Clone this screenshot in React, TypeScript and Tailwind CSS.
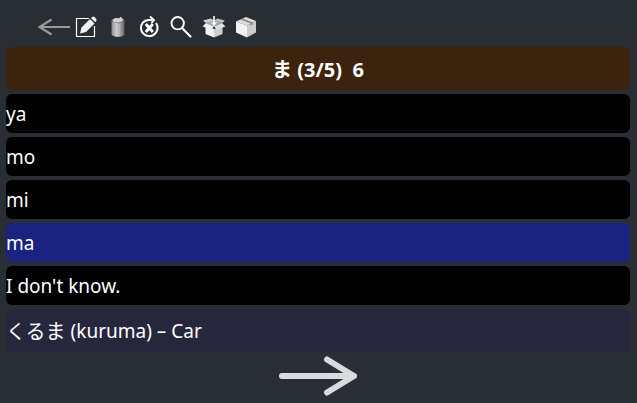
import { useState } from 'react';

const answers = ['ya', 'mo', 'mi', 'ma', "I don't know."];

export default function App() {
    const [selected, setSelected] = useState('ma');

    return (
        <div className="min-h-screen bg-[#292d34] pl-[6px] pr-[7px] pt-[11px] text-[19px] text-white font-['Noto_Sans','Noto_Sans_CJK_JP',sans-serif]">

            {/* Toolbar */}
            <nav className="flex pl-8 mb-1">
                <ToolButton label="Back"><BackIcon /></ToolButton>
                <ToolButton label="Edit"><EditIcon /></ToolButton>
                <ToolButton label="Delete"><TrashIcon /></ToolButton>
                <ToolButton label="Reset progress"><ResetIcon /></ToolButton>
                <ToolButton label="Search"><SearchIcon /></ToolButton>
                <ToolButton label="Unpack"><OpenBoxIcon /></ToolButton>
                <ToolButton label="Pack"><BoxIcon /></ToolButton>
            </nav>

            <main className="flex flex-col gap-1">
                <h1 className="flex h-[43px] items-center justify-center whitespace-pre rounded-md bg-[#3b230d] pt-0.5 text-xl font-bold">
                    ま (3/5)  6
                </h1>

                {answers.map((answer) => (
                    <button
                        key={answer}
                        type="button"
                        aria-pressed={answer === selected}
                        onClick={() => setSelected(answer)}
                        className={`h-[39px] rounded-md pt-0.5 text-left ${answer === selected ? 'bg-[#1a237f]' : 'bg-black'}`}
                    >
                        {answer}
                    </button>
                ))}

                <p className="flex h-[43px] items-center whitespace-pre rounded-md bg-[#26273d] pt-0.5">
                    <span lang="ja" className="text-xl">くるま</span> (kuruma) – Car
                </p>

                <button type="button" aria-label="Next" className="mx-auto">
                    <svg className="h-10 w-20" viewBox="0 0 80 40" fill="none" stroke="#d9dadb" strokeWidth="6" strokeLinecap="round" strokeLinejoin="round">
                        <path d="M4 20H76M49 3.5L76 20L49 36.5" />
                    </svg>
                </button>
            </main>
        </div>
    );
}

function ToolButton({ label, children }: { label: string, children: React.ReactNode }) {
    return (
        <button type="button" aria-label={label} title={label} className="h-8 w-8">
            {children}
        </button>
    );
}

function BackIcon() {
    return (
        <svg className="h-8 w-8" viewBox="0 0 32 32" fill="none" stroke="#999b99" strokeWidth="2.2">
            <path d="M1 16H32M13.5 8.5L1.5 16L13.5 23.5" />
        </svg>
    );
}

function EditIcon() {
    return (
        <svg className="h-8 w-8" viewBox="0 0 32 32">
            <path d="M19 7.5H6.5V25.5H24.5V15" fill="none" stroke="#fff" strokeWidth="1.2" strokeLinejoin="round" />
            <path d="M10 22.5L11.5 16.5L20 8L24.5 12.5L16 21Z" fill="#f2f2f2" />
            <path d="M21 7L22.5 5.8Q23.5 5.3 24.5 6L26.2 7.8Q27 8.8 26.3 9.8L25.3 11.3Z" fill="#f2f2f2" />
        </svg>
    );
}

function TrashIcon() {
    return (
        <svg className="h-8 w-8" viewBox="0 0 32 32">
            <defs>
                <linearGradient id="can">
                    <stop offset="0" stopColor="#858585" />
                    <stop offset="0.3" stopColor="#d2d2d2" />
                    <stop offset="0.65" stopColor="#adadad" />
                    <stop offset="1" stopColor="#5d5d5d" />
                </linearGradient>
            </defs>
            <path d="M9.5 9.5V24Q16 28 22.5 24V9.5Z" fill="url(#can)" />
            <ellipse cx="16" cy="9.7" rx="6.5" ry="2.6" fill="#777" />
            <path d="M10.5 9.5L13 7L17 7.3L19 5.8L21 8.5L20 10.5L16 11.5L12 11.2Z" fill="#d0d0d0" />
            <path d="M13 13V24.5M18.5 13V24.5" stroke="#969696" strokeWidth="0.6" />
        </svg>
    );
}

function ResetIcon() {
    return (
        <svg className="h-8 w-8" viewBox="0 0 32 32" fill="none" stroke="#fff" strokeWidth="2">
            <path d="M22 12A8.3 8.3 0 1 1 8.8 11.6Q11 9.2 14.5 9H18.5" />
            <path d="M16 5.5L20 9L17.5 12" strokeWidth="1.8" />
            <path d="M11.8 13L18.8 21M18.8 13L11.8 21" strokeWidth="2.8" />
        </svg>
    );
}

function SearchIcon() {
    return (
        <svg className="h-8 w-8" viewBox="0 0 32 32" fill="none" stroke="#fff">
            <circle cx="11.7" cy="12.2" r="6.2" strokeWidth="1.9" />
            <path d="M16 17L24.5 25.5" strokeWidth="2.2" strokeLinecap="round" />
        </svg>
    );
}

function OpenBoxIcon() {
    return (
        <svg className="h-8 w-8" viewBox="0 0 32 32">
            <path d="M7.5 15L16 18V26.5L7.5 23Z" fill="#f2f2f2" />
            <path d="M24.5 15L16 18V26.5L24.5 23Z" fill="#cfcfcf" />
            <path d="M8 12L16 9L24 12L16 15.5Z" fill="#a5a7aa" />
            <path d="M8 12L16 15.5L13 18.5L4.5 15.5Z" fill="#f0f0f0" />
            <path d="M24 12L16 15.5L19 18.5L27.5 15.5Z" fill="#dedede" />
            <path d="M8 12L5 9.5L12.5 7.5L16 9.5Z" fill="#cfcfcf" />
            <path d="M24 12L27 9.5L19.5 7.5L16 9.5Z" fill="#bebebe" />
            <path d="M15.2 5H16.8V11.5H19L16 15L13 11.5H15.2Z" fill="#fff" />
        </svg>
    );
}

function BoxIcon() {
    return (
        <svg className="h-8 w-8" viewBox="0 0 32 32">
            <path d="M6 10.5L16 6L26 10L17 14.5Z" fill="#dedede" />
            <path d="M6 10.5L17 14.5V26.5L6 21.5Z" fill="#f2f2f2" />
            <path d="M17 14.5L26 10V21.5L17 26.5Z" fill="#cccccc" />
            <path d="M10.5 8.5L13 7.4L23 11.4V13.5L20.5 14.5V12.6Z" fill="#8a8a8a" />
        </svg>
    );
}
